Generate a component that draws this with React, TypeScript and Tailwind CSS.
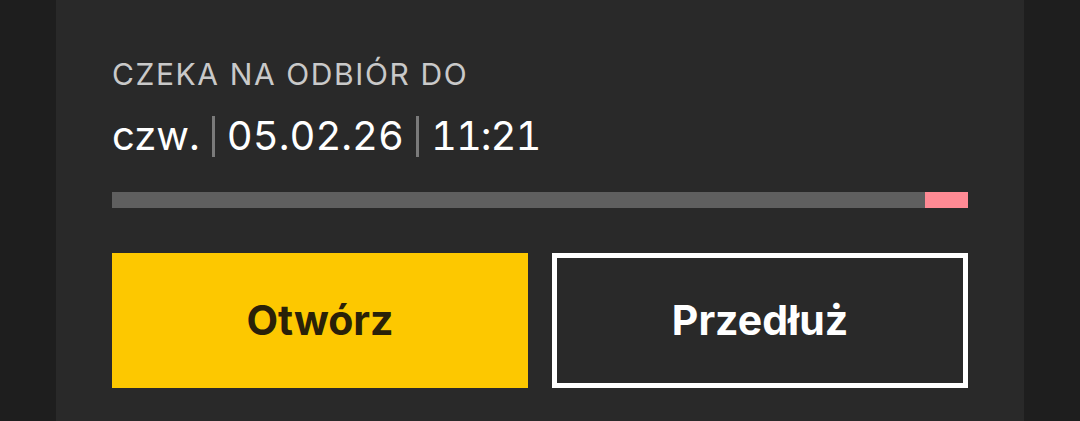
export default function App() {
  return (
    <div className="h-[421px] w-[1080px] overflow-hidden bg-[#1e1e1e] px-[56px] font-['Inter',sans-serif]">
      <div className="h-full bg-[#292929] px-[56px] pt-[58px]">
        <div className="text-[30px] leading-[32px] tracking-[1.6px] text-[#c9c9c9]">CZEKA NA ODBIÓR DO</div>
        <div className="mt-[23px] flex items-center text-[40px] leading-[46px] text-white tabular-nums">
          <span>czw.</span>
          <span className="mx-[12px] h-[41px] w-[3px] bg-[#7a7a7a]" />
          <span>05.02.26</span>
          <span className="mx-[12px] h-[41px] w-[3px] bg-[#7a7a7a]" />
          <span className="tracking-[-1px]">11:21</span>
        </div>
        <div className="mt-[33px] flex h-[16px]">
          <div className="flex-1 bg-[#5f5f5f]" />
          <div className="w-[43px] bg-[#ff8a94]" />
        </div>
        <div className="mt-[45px] grid grid-cols-2 gap-[24px]">
          <button className="flex h-[135px] items-center justify-center bg-[#fdc800] text-[41px] font-bold text-[#2a2108]">
            Otwórz
          </button>
          <button className="flex h-[135px] items-center justify-center border-[5px] border-white text-[41px] font-bold text-white">
            Przedłuż
          </button>
        </div>
      </div>
    </div>
  );
}
